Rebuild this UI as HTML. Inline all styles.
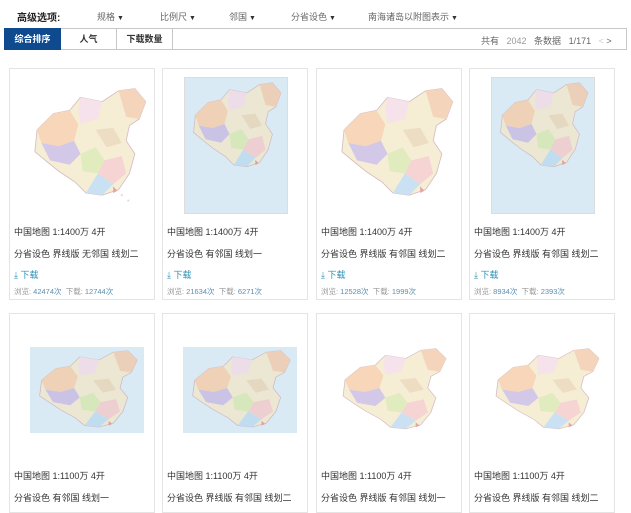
<!DOCTYPE html>
<html><head><meta charset="utf-8"><style>
*{margin:0;padding:0;box-sizing:border-box}
body{width:631px;height:500px;overflow:hidden;background:#fff;font-family:"Liberation Sans","Noto Sans CJK SC",sans-serif;color:#333;position:relative}
.a{position:absolute}
.opt{font-size:9px;color:#666;top:10px}
.opt:after{content:" ▼";font-size:7px;color:#333}
.card{position:absolute;width:146px;border:1px solid #e4e4e4;background:#fff}
.t{position:absolute;left:4px;font-size:9px;color:#333;white-space:nowrap}
.dl{color:#2a8fb5}
.st{font-size:7.5px;color:#999}
.st b{font-weight:normal;color:#5b8fb0}
svg.m{opacity:.75}
</style></head><body>
<div class="a" style="left:17px;top:9px;font-size:10px;font-weight:bold;color:#222">高级选项:</div>
<div class="a opt" style="left:97px">规格</div>
<div class="a opt" style="left:160px">比例尺</div>
<div class="a opt" style="left:229px">邻国</div>
<div class="a opt" style="left:291px">分省设色</div>
<div class="a opt" style="left:368px">南海诸岛以附图表示</div>
<div class="a" style="left:4px;top:28px;width:623px;height:22px;border:1px solid #c8c8c8;background:#fff"></div>
<div class="a" style="left:4px;top:28px;width:57px;height:22px;background:#104a8e;color:#fff;font-size:9px;font-weight:bold;text-align:center;line-height:22px">综合排序</div>
<div class="a" style="left:61px;top:28px;width:56px;height:22px;border-right:1px solid #c8c8c8;font-size:9px;font-weight:bold;text-align:center;line-height:22px">人气</div>
<div class="a" style="left:117px;top:28px;width:56px;height:22px;border-right:1px solid #c8c8c8;font-size:9px;font-weight:bold;text-align:center;line-height:22px">下载数量</div>
<div class="a" style="left:481px;top:34px;font-size:9px;color:#666">共有 <span style="color:#999;margin:0 5px">2042</span> 条数据 <span style="margin-left:5px">1/171</span> <span style="color:#ccc;margin-left:5px">&lt;</span> <span>&gt;</span></div>

<svg width="0" height="0" style="position:absolute"><defs>
<g id="cn">
<path d="M10 40 L25 25 L40 22 L50 10 L70 14 L85 4 L100 2 L110 14 L104 30 L95 36 L92 50 L100 62 L95 80 L85 95 L70 100 L55 98 L45 88 L30 78 L20 70 L8 60 Z" fill="#f3e7c8" stroke="#c9a8b0" stroke-width="0.8"/>
<path d="M10 40 L25 25 L40 22 L48 35 L44 50 L30 55 L14 52 Z" fill="#f5c9a3"/>
<path d="M14 52 L30 55 L44 50 L50 62 L40 72 L22 68 Z" fill="#c5b6e0"/>
<path d="M50 10 L70 14 L66 30 L50 34 L48 22 Z" fill="#f3d9e4"/>
<path d="M85 4 L100 2 L110 14 L104 30 L92 28 Z" fill="#f1c7a6"/>
<path d="M50 62 L64 56 L72 68 L66 80 L52 78 Z" fill="#d6e6a8"/>
<path d="M72 68 L88 64 L92 80 L80 90 L66 80 Z" fill="#f5c6c6"/>
<path d="M66 80 L80 90 L70 100 L55 98 Z" fill="#b8d8ee"/>
<path d="M64 40 L80 38 L88 52 L74 56 Z" fill="#e8d2b0"/>
<path d="M80 92 L84 96 L80 98 Z" fill="#d88"/>
</g></defs></svg>

<!-- row 1 -->
<div class="card" style="left:9px;top:68px;height:232px">
<svg class="a m" style="left:14px;top:12px" width="125" height="125" viewBox="0 0 115 115"><use href="#cn" transform="translate(2,5)"/><g fill="#cab" opacity=".6"><circle cx="90" cy="105" r="1"/><circle cx="96" cy="110" r="1"/></g></svg>
<div class="t" style="top:156px">中国地图 1:1400万 4开</div>
<div class="t" style="top:178px">分省设色 界线版 无邻国 线划二</div>
<div class="t dl" style="top:199px">⤓ 下载</div>
<div class="t st" style="top:217px">浏览: <b>42474次</b> &nbsp;下载: <b>12744次</b></div>
</div>
<div class="card" style="left:162px;top:68px;height:232px">
<div class="a" style="left:21px;top:8px;width:104px;height:137px;background:#d9eaf5;border:1px solid #ddd"></div>
<svg class="a m" style="left:23px;top:12px" width="100" height="90" viewBox="0 0 115 105"><use href="#cn"/></svg>
<div class="t" style="top:156px">中国地图 1:1400万 4开</div>
<div class="t" style="top:178px">分省设色 有邻国 线划一</div>
<div class="t dl" style="top:199px">⤓ 下载</div>
<div class="t st" style="top:217px">浏览: <b>21634次</b> &nbsp;下载: <b>6271次</b></div>
</div>
<div class="card" style="left:316px;top:68px;height:232px">
<svg class="a m" style="left:14px;top:12px" width="125" height="125" viewBox="0 0 115 115"><use href="#cn" transform="translate(2,5)"/></svg>
<div class="t" style="top:156px">中国地图 1:1400万 4开</div>
<div class="t" style="top:178px">分省设色 界线版 有邻国 线划二</div>
<div class="t dl" style="top:199px">⤓ 下载</div>
<div class="t st" style="top:217px">浏览: <b>12528次</b> &nbsp;下载: <b>1999次</b></div>
</div>
<div class="card" style="left:469px;top:68px;height:232px">
<div class="a" style="left:21px;top:8px;width:104px;height:137px;background:#d9eaf5;border:1px solid #ddd"></div>
<svg class="a m" style="left:23px;top:12px" width="100" height="90" viewBox="0 0 115 105"><use href="#cn"/></svg>
<div class="t" style="top:156px">中国地图 1:1400万 4开</div>
<div class="t" style="top:178px">分省设色 界线版 有邻国 线划二</div>
<div class="t dl" style="top:199px">⤓ 下载</div>
<div class="t st" style="top:217px">浏览: <b>8934次</b> &nbsp;下载: <b>2393次</b></div>
</div>
<!-- row 2 -->
<div class="card" style="left:9px;top:313px;height:200px">
<div class="a" style="left:20px;top:33px;width:114px;height:86px;background:#d9eaf5"></div>
<svg class="a m" style="left:22px;top:35px" width="110" height="82" viewBox="0 0 115 105" preserveAspectRatio="none"><use href="#cn"/></svg>
<div class="t" style="top:155px">中国地图 1:1100万 4开</div>
<div class="t" style="top:177px">分省设色 有邻国 线划一</div>
</div>
<div class="card" style="left:162px;top:313px;height:200px">
<div class="a" style="left:20px;top:33px;width:114px;height:86px;background:#d9eaf5"></div>
<svg class="a m" style="left:22px;top:35px" width="110" height="82" viewBox="0 0 115 105" preserveAspectRatio="none"><use href="#cn"/></svg>
<div class="t" style="top:155px">中国地图 1:1100万 4开</div>
<div class="t" style="top:177px">分省设色 界线版 有邻国 线划二</div>
</div>
<div class="card" style="left:316px;top:313px;height:200px">
<svg class="a m" style="left:18px;top:33px" width="116" height="86" viewBox="0 0 115 105" preserveAspectRatio="none"><use href="#cn"/></svg>
<div class="t" style="top:155px">中国地图 1:1100万 4开</div>
<div class="t" style="top:177px">分省设色 界线版 有邻国 线划一</div>
</div>
<div class="card" style="left:469px;top:313px;height:200px">
<svg class="a m" style="left:18px;top:33px" width="116" height="86" viewBox="0 0 115 105" preserveAspectRatio="none"><use href="#cn"/></svg>
<div class="t" style="top:155px">中国地图 1:1100万 4开</div>
<div class="t" style="top:177px">分省设色 界线版 有邻国 线划二</div>
</div>
</body></html>
